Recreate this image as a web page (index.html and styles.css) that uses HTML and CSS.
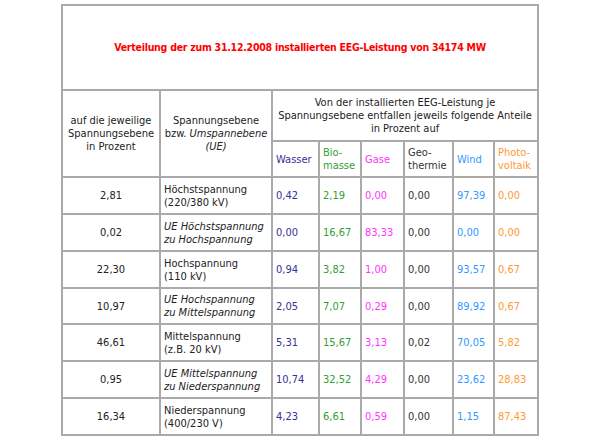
FILE: index.html
```html
<!DOCTYPE html>
<html lang="de">
<head>
<meta charset="utf-8">
<link rel="stylesheet" href="styles.css">
</head>
<body>
<table class="eeg">
  <colgroup>
    <col class="c-pct"><col class="c-lvl"><col class="c-w"><col class="c-b"><col class="c-g"><col class="c-geo"><col class="c-wind"><col class="c-pv">
  </colgroup>
  <tr class="r-title"><td colspan="8" class="title">Verteilung der zum 31.12.2008 installierten EEG-Leistung von 34174 MW</td></tr>
  <tr class="r-sub">
    <td rowspan="2" class="ctr">auf die jeweilige<br>Spannungsebene<br>in Prozent</td>
    <td rowspan="2" class="ctr">Spannungsebene<br>bzw. <i>Umspannebene</i><br><i>(UE)</i></td>
    <td colspan="6" class="ctr">Von der installierten EEG-Leistung je<br>Spannungsebene entfallen jeweils folgende Anteile<br>in Prozent auf</td>
  </tr>
  <tr class="r-head">
    <td class="wasser">Wasser</td><td class="bio">Bio-<br>masse</td><td class="gase">Gase</td><td class="geo">Geo-<br>thermie</td><td class="wind">Wind</td><td class="pv">Photo-<br>voltaik</td>
  </tr>
  <tr class="r-data"><td class="ctr">2,81</td><td>Höchstspannung<br>(220/380 kV)</td><td class="wasser">0,42</td><td class="bio">2,19</td><td class="gase">0,00</td><td class="geo">0,00</td><td class="wind">97,39</td><td class="pv">0,00</td></tr>
  <tr class="r-data"><td class="ctr">0,02</td><td><i>UE Höchstspannung<br>zu Hochspannung</i></td><td class="wasser">0,00</td><td class="bio">16,67</td><td class="gase">83,33</td><td class="geo">0,00</td><td class="wind">0,00</td><td class="pv">0,00</td></tr>
  <tr class="r-data"><td class="ctr">22,30</td><td>Hochspannung<br>(110 kV)</td><td class="wasser">0,94</td><td class="bio">3,82</td><td class="gase">1,00</td><td class="geo">0,00</td><td class="wind">93,57</td><td class="pv">0,67</td></tr>
  <tr class="r-data r-short"><td class="ctr">10,97</td><td><i>UE Hochspannung<br>zu Mittelspannung</i></td><td class="wasser">2,05</td><td class="bio">7,07</td><td class="gase">0,29</td><td class="geo">0,00</td><td class="wind">89,92</td><td class="pv">0,67</td></tr>
  <tr class="r-data"><td class="ctr">46,61</td><td>Mittelspannung<br>(z.B. 20 kV)</td><td class="wasser">5,31</td><td class="bio">15,67</td><td class="gase">3,13</td><td class="geo">0,02</td><td class="wind">70,05</td><td class="pv">5,82</td></tr>
  <tr class="r-data"><td class="ctr">0,95</td><td><i>UE Mittelspannung<br>zu Niederspannung</i></td><td class="wasser">10,74</td><td class="bio">32,52</td><td class="gase">4,29</td><td class="geo">0,00</td><td class="wind">23,62</td><td class="pv">28,83</td></tr>
  <tr class="r-data"><td class="ctr">16,34</td><td>Niederspannung<br>(400/230 V)</td><td class="wasser">4,23</td><td class="bio">6,61</td><td class="gase">0,59</td><td class="geo">0,00</td><td class="wind">1,15</td><td class="pv">87,43</td></tr>
</table>
</body>
</html>
```
FILE: styles.css
```css
html, body {
  margin: 0;
  padding: 0;
  background: #fff;
}
body {
  padding: 4px 0 0 61px;
  font-family: "DejaVu Sans Condensed", "DejaVu Sans", sans-serif;
  font-size: 11px;
  line-height: 13px;
  color: #222;
}
.eeg {
  border-collapse: collapse;
  table-layout: fixed;
  width: 476px;
  border: 2px solid #aaa;
}
.eeg td {
  border: 2px solid #aaa;
  padding: 0 0 0 3px;
  vertical-align: middle;
  white-space: nowrap;
  overflow: hidden;
}
.c-pct { width: 98px; }
.c-lvl { width: 112px; }
.c-w { width: 47px; }
.c-b { width: 42px; }
.c-g { width: 43px; }
.c-geo { width: 49px; }
.c-wind { width: 41px; }
.c-pv { width: 44px; }
.r-title { height: 85px; }
.r-sub { height: 51px; }
.r-head { height: 36px; }
.r-data { height: 37px; }
.r-data.r-short { height: 36px; }
.eeg td.title {
  text-align: center;
  color: #ff0000;
  font-weight: bold;
  font-size: 10.5px;
  letter-spacing: -0.25px;
  padding: 0;
}
.eeg td.ctr {
  text-align: center;
  padding: 0;
}
.wasser { color: #333399; }
.bio { color: #33a033; }
.gase { color: #ff33ff; }
.geo { color: #333; }
.wind { color: #3399ff; }
.pv { color: #ff9933; }
```
